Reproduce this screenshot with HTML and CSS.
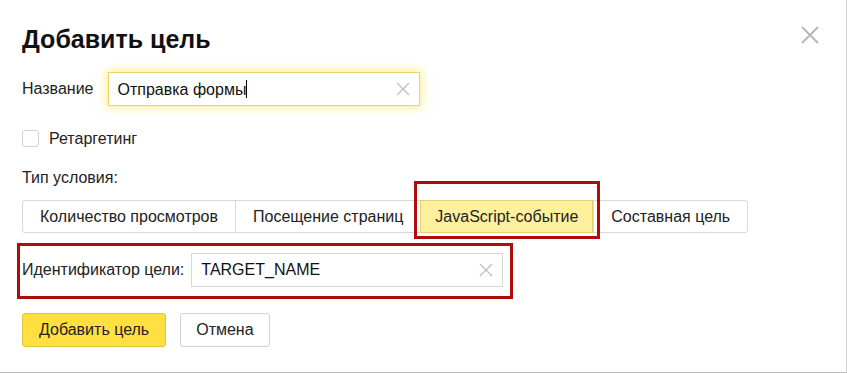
FILE: index.html
```html
<!DOCTYPE html>
<html lang="ru">
<head>
<meta charset="utf-8">
<title>Добавить цель</title>
<link rel="stylesheet" href="styles.css">
</head>
<body>
<div class="dialog">
  <div class="head">
    <h1 class="title">Добавить цель</h1>
    <button class="close" aria-label="Закрыть">
      <svg width="18" height="18" viewBox="0 0 18 18"><path d="M1 1L17 17M17 1L1 17" stroke="#b8b8b8" stroke-width="2" fill="none"/></svg>
    </button>
  </div>

  <div class="row name-row">
    <span class="label">Название</span>
    <div class="input focused">
      <span class="value">Отправка формы<span class="caret"></span></span>
      <svg class="clear" width="14" height="14" viewBox="0 0 14 14"><path d="M1 1L13 13M13 1L1 13" stroke="#bdbdbd" stroke-width="1.2" fill="none"/></svg>
    </div>
  </div>

  <label class="check-row">
    <span class="checkbox"></span>
    <span class="check-text">Ретаргетинг</span>
  </label>

  <div class="type-label">Тип условия:</div>

  <div class="segments">
    <span class="seg seg-views">Количество просмотров</span>
    <span class="seg seg-pages">Посещение страниц</span>
    <span class="seg active">JavaScript-событие<span class="mark"></span></span>
    <span class="seg seg-composite">Составная цель</span>
  </div>

  <div class="row id-row">
    <span class="label">Идентификатор цели:</span>
    <div class="input id-input">
      <span class="value">TARGET_NAME</span>
      <svg class="clear" width="14" height="14" viewBox="0 0 14 14"><path d="M1 1L13 13M13 1L1 13" stroke="#bdbdbd" stroke-width="1.2" fill="none"/></svg>
    </div>
  </div>

  <div class="actions">
    <button class="btn primary">Добавить цель</button>
    <button class="btn">Отмена</button>
  </div>
</div>
</body>
</html>
```

FILE: styles.css
```css
html, body {
  margin: 0;
  padding: 0;
  background: #fff;
}
body {
  font-family: "Liberation Sans", Arial, sans-serif;
  font-size: 16px;
  color: #222;
}
.dialog {
  box-sizing: border-box;
  width: 847px;
  height: 373px;
  border-right: 1px solid #d0d0d0;
  border-bottom: 1px solid #bdbdbd;
  padding: 0 0 0 22px;
  overflow: hidden;
}
.head {
  display: flex;
  justify-content: space-between;
  align-items: flex-start;
  padding-top: 24px;
  height: 48px;
  box-sizing: border-box;
}
.title {
  margin: 0;
  font-size: 25px;
  font-weight: bold;
  line-height: 30px;
  color: #111;
}
.close {
  margin: 2px 27px 0 0;
  padding: 0;
  border: 0;
  background: none;
  width: 18px;
  height: 18px;
}
.row {
  display: flex;
  align-items: center;
}
.name-row {
  margin-top: 24px;
}
.label {
  color: #222;
}
.input {
  box-sizing: border-box;
  height: 34px;
  display: flex;
  align-items: center;
  justify-content: space-between;
  border: 1px solid #d6d6d6;
  padding: 0 9px 0 9px;
  background: #fff;
}
.input .value {
  color: #111;
}
.focused {
  width: 312px;
  margin-left: 14px;
  border-color: #e8d46e;
  box-shadow: 0 0 9px 2px rgba(255, 224, 60, 0.55);
}
.caret {
  display: inline-block;
  width: 1px;
  height: 18px;
  background: #000;
  vertical-align: -3px;
}
.check-row {
  display: flex;
  align-items: center;
  margin-top: 24px;
  height: 17px;
}
.checkbox {
  box-sizing: border-box;
  width: 17px;
  height: 17px;
  border: 1px solid #cfcfcf;
  border-radius: 3px;
  background: #fff;
}
.check-text {
  margin-left: 10px;
}
.type-label {
  margin-top: 22px;
  line-height: 18px;
}
.segments {
  display: flex;
  margin-top: 13px;
  width: max-content;
  border: 1px solid #d9d9d9;
  border-radius: 3px;
  height: 33px;
  box-sizing: border-box;
}
.seg {
  position: relative;
  display: flex;
  align-items: center;
  padding: 0 16px;
  border-left: 1px solid #d9d9d9;
  color: #222;
}
.seg-views {
  border-left: 0;
  padding: 0 17px;
}
.seg-pages {
  padding: 0 17px;
}
.seg-composite {
  padding: 0 17px;
}
.seg.active {
  background: #fff0a0;
  border: 1px solid #e3d06e;
  margin: -1px 0;
  padding: 0 14px;
}
.mark {
  position: absolute;
  left: -7px;
  right: -8px;
  top: -20px;
  bottom: -7px;
  border: 3px solid #b10b0b;
  pointer-events: none;
}
.id-row {
  margin-top: 10px;
  margin-left: -5px;
  width: max-content;
  border: 3px solid #b10b0b;
  padding: 7px 7px 9px 2px;
}
.id-input {
  width: 312px;
  margin-left: 7px;
}
.actions {
  display: flex;
  margin-top: 14px;
  gap: 14px;
}
.btn {
  font-family: inherit;
  font-size: 16px;
  height: 34px;
  box-sizing: border-box;
  padding: 0 15px;
  border: 1px solid #d2d2d2;
  border-radius: 3px;
  background: #fff;
  color: #222;
}
.btn.primary {
  background: #ffe040;
  border-color: #e2c43a;
  padding: 0 16px;
}
```
